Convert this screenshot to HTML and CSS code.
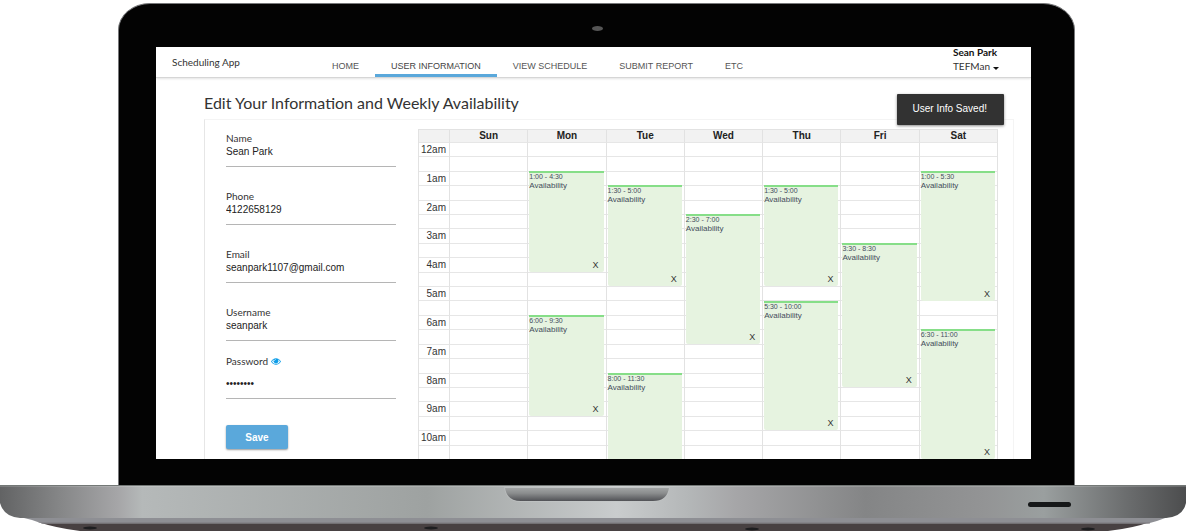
FILE: index.html
```html
<!DOCTYPE html>
<html lang="en">
<head>
<meta charset="utf-8">
<title>Scheduling App</title>
<link rel="stylesheet" href="styles.css">
</head>
<body>
<div class="laptop">
  <div class="lid">
    <div class="bezel-top"><span class="camera"></span></div>
    <div class="screen">
      <header class="topbar">
        <div class="brand">Scheduling App</div>
        <nav class="tabs">
          <a class="tab" href="#home">HOME</a>
          <a class="tab tab-active" href="#user">USER INFORMATION</a>
          <a class="tab" href="#schedule">VIEW SCHEDULE</a>
          <a class="tab" href="#report">SUBMIT REPORT</a>
          <a class="tab" href="#etc">ETC</a>
        </nav>
        <div class="account">
          <div class="account-name">Sean Park</div>
          <button class="account-menu" type="button">TEFMan <span class="caret"></span></button>
        </div>
      </header>
      <div class="toast" role="status">User Info Saved!</div>
      <main class="content">
        <h1 class="title">Edit Your Information and Weekly Availability</h1>
        <div class="card">
          <form class="profile">
            <div class="field">
              <label class="label" for="name">Name</label>
              <input class="input" id="name" type="text" value="Sean Park">
            </div>
            <div class="field">
              <label class="label" for="phone">Phone</label>
              <input class="input" id="phone" type="text" value="4122658129">
            </div>
            <div class="field">
              <label class="label" for="email">Email</label>
              <input class="input" id="email" type="text" value="seanpark1107@gmail.com">
            </div>
            <div class="field">
              <label class="label" for="username">Username</label>
              <input class="input" id="username" type="text" value="seanpark">
            </div>
            <div class="field field-password">
              <label class="label" for="password">Password
                <svg class="eye" viewBox="0 0 20 14" aria-hidden="true"><path fill="#0d9de8" fill-rule="evenodd" d="M0 7C3 2.500 6.500 .500 10 .500S17 2.500 20 7C17 11.500 13.500 13.500 10 13.500S3 11.500 0 7ZM2 7C4.500 10.600 7 12 10 12S15.500 10.600 18 7C16.900 5.300 15.500 3.900 14 3A5 5 0 1 1 6 3C4.500 3.900 3.100 5.300 2 7ZM10 2.300A3.500 3.500 0 0 0 6.600 5.800H7.700A2.400 2.400 0 0 1 10 3.400Z"/></svg>
              </label>
              <input class="input input-password" id="password" type="password" value="password">
            </div>
            <button class="save" type="button">Save</button>
          </form>
          <div class="calendar">
            <table class="week">
              <thead>
                <tr><th></th><th>Sun</th><th>Mon</th><th>Tue</th><th>Wed</th><th>Thu</th><th>Fri</th><th>Sat</th></tr>
              </thead>
              <tbody>
                <tr><th>12am</th><td></td><td></td><td></td><td></td><td></td><td></td><td></td></tr>
                <tr><th>1am</th><td></td><td></td><td></td><td></td><td></td><td></td><td></td></tr>
                <tr><th>2am</th><td></td><td></td><td></td><td></td><td></td><td></td><td></td></tr>
                <tr><th>3am</th><td></td><td></td><td></td><td></td><td></td><td></td><td></td></tr>
                <tr><th>4am</th><td></td><td></td><td></td><td></td><td></td><td></td><td></td></tr>
                <tr><th>5am</th><td></td><td></td><td></td><td></td><td></td><td></td><td></td></tr>
                <tr><th>6am</th><td></td><td></td><td></td><td></td><td></td><td></td><td></td></tr>
                <tr><th>7am</th><td></td><td></td><td></td><td></td><td></td><td></td><td></td></tr>
                <tr><th>8am</th><td></td><td></td><td></td><td></td><td></td><td></td><td></td></tr>
                <tr><th>9am</th><td></td><td></td><td></td><td></td><td></td><td></td><td></td></tr>
                <tr><th>10am</th><td></td><td></td><td></td><td></td><td></td><td></td><td></td></tr>
              </tbody>
            </table>
            <div class="events">
              <div class="event" style="grid-column:2;grid-row:3/10"><span class="time">1:00 - 4:30</span><span>Availability</span><button class="remove" type="button">X</button></div>
              <div class="event" style="grid-column:2;grid-row:13/20"><span class="time">6:00 - 9:30</span><span>Availability</span><button class="remove" type="button">X</button></div>
              <div class="event" style="grid-column:3;grid-row:4/11"><span class="time">1:30 - 5:00</span><span>Availability</span><button class="remove" type="button">X</button></div>
              <div class="event event-cut" style="grid-column:3;grid-row:17/23"><span class="time">8:00 - 11:30</span><span>Availability</span></div>
              <div class="event" style="grid-column:4;grid-row:6/15"><span class="time">2:30 - 7:00</span><span>Availability</span><button class="remove" type="button">X</button></div>
              <div class="event" style="grid-column:5;grid-row:4/11"><span class="time">1:30 - 5:00</span><span>Availability</span><button class="remove" type="button">X</button></div>
              <div class="event" style="grid-column:5;grid-row:12/21"><span class="time">5:30 - 10:00</span><span>Availability</span><button class="remove" type="button">X</button></div>
              <div class="event" style="grid-column:6;grid-row:8/18"><span class="time">3:30 - 8:30</span><span>Availability</span><button class="remove" type="button">X</button></div>
              <div class="event" style="grid-column:7;grid-row:3/12"><span class="time">1:00 - 5:30</span><span>Availability</span><button class="remove" type="button">X</button></div>
              <div class="event" style="grid-column:7;grid-row:14/23"><span class="time">6:30 - 11:00</span><span>Availability</span><button class="remove" type="button">X</button></div>
            </div>
          </div>
        </div>
      </main>
    </div>
  </div>
  <svg class="base" viewBox="0 0 1186 46" preserveAspectRatio="none" aria-hidden="true">
    <defs>
      <linearGradient id="deck" gradientUnits="userSpaceOnUse" x1="0" x2="1186" y1="0" y2="0">
        <stop offset="0" stop-color="#626364"/>
        <stop offset=".05" stop-color="#858687"/>
        <stop offset=".1" stop-color="#a6a6a8"/>
        <stop offset=".12" stop-color="#b5b9b9"/>
        <stop offset=".36" stop-color="#9ea2a1"/>
        <stop offset=".52" stop-color="#c9cccd"/>
        <stop offset=".58" stop-color="#b4b7b8"/>
        <stop offset=".62" stop-color="#a6a6a8"/>
        <stop offset=".73" stop-color="#848586"/>
        <stop offset=".83" stop-color="#939495"/>
        <stop offset=".88" stop-color="#9a9f9f"/>
        <stop offset=".95" stop-color="#6b6d6e"/>
        <stop offset="1" stop-color="#4c4d4e"/>
      </linearGradient>
      <linearGradient id="notch" x1="0" x2="0" y1="0" y2="1">
        <stop offset="0" stop-color="#a1a4a4"/>
        <stop offset=".4" stop-color="#8b8d8e"/>
        <stop offset="1" stop-color="#515256"/>
      </linearGradient>
    </defs>
    <path fill="#484142" d="M38 37H1150Q1134 43 1108 46H80Q56 43 38 37Z"/>
    <path fill="#8e8f94" d="M22 32H1168Q1158 36 1148 38.500H42Q34 35 24 33Z"/>
    <path fill="#7c7b7f" d="M40 37.500H1150V38.500H42Z"/>
    <path fill="url(#deck)" d="M0 0H1186V18Q1183 32 1166 33H20Q4 32 0 18Z"/>
    <path fill="#737876" d="M0 0H1186V1H0Z"/>
    <path fill="#fff" opacity=".15" d="M0 1H1186V2H0Z"/>
    <path fill="#c3c6c6" d="M504 2H670Q668 17 653 17H521Q506 17 504 2Z" opacity=".6"/>
    <path fill="url(#notch)" d="M505 3H669Q667 16 653 16H521Q507 16 505 3Z"/>
    <rect x="1028" y="17" width="43" height="5" rx="2.500" fill="#151718"/>
    <ellipse cx="90" cy="43" rx="7" ry="1.500" fill="#1e1e20"/>
    <ellipse cx="431" cy="43" rx="7" ry="1.500" fill="#1e1e20"/>
    <ellipse cx="752" cy="44" rx="7" ry="1.500" fill="#1e1e20"/>
    <ellipse cx="1088" cy="44" rx="7" ry="1.500" fill="#1e1e20"/>
  </svg>
</div>
</body>
</html>
```
FILE: styles.css
```css
* { box-sizing: border-box; }

body {
  margin: 0;
  background: #fff;
  color: #333;
  font-family: "Liberation Sans", Arial, sans-serif;
  font-size: 10px;
}

button, input { font: inherit; color: inherit; border: 0; padding: 0; margin: 0; background: none; }

.laptop {
  display: flex;
  flex-direction: column;
  min-height: 100vh;
  padding-top: 3px;
}

.lid {
  flex: 1;
  display: flex;
  flex-direction: column;
  margin: 0 111px 0 118px;
  padding: 0 43px 26px 37px;
  background: #030303;
  border: 1px solid #77787a;
  border-bottom: 0;
  border-radius: 32px 32px 0 0 / 27px 27px 0 0;
}

.bezel-top {
  display: flex;
  justify-content: center;
  height: 43px;
  padding: 22px 0 0 8px;
}

.camera { width: 11px; height: 5px; border-radius: 50%; background: #555; }

.screen {
  position: relative;
  flex: 1;
  display: flex;
  flex-direction: column;
  overflow: hidden;
  background: #fff;
}

.topbar {
  display: flex;
  height: 31px;
  padding: 0 32px 0 16px;
  border-bottom: 1px solid #d6d6d6;
  box-shadow: 0 1px 2px #e4e4e4;
}

.brand {
  width: 144px;
  padding-top: 9px;
  font: 10px/12px Lato, sans-serif;
}

.tabs { display: flex; flex: 1; }

.tab {
  padding: 13px 16px 0;
  border-bottom: 3px solid transparent;
  color: #555;
  font-size: 9px;
  line-height: 12px;
  text-decoration: none;
  white-space: nowrap;
}

.tab-active { border-color: #5aa8db; color: #444; }

.account { font: 10px/11px Lato, sans-serif; }
.account-name { color: #111; font-weight: 700; }

.account-menu {
  display: flex;
  align-items: center;
  gap: 3px;
  padding-top: 3px;
}

.caret { border: 3px solid transparent; border-top-color: #111; border-bottom: 0; margin-top: 3px; }

.toast {
  position: absolute;
  top: 47px;
  right: 27px;
  padding: 9px 17px 10px 16px;
  border-radius: 1px;
  background: #323232;
  box-shadow: 0 1px 3px #888;
  color: #fff;
  line-height: 12px;
}

.content {
  flex: 1;
  display: flex;
  flex-direction: column;
  padding: 13px 17px 0 48px;
}

.title {
  margin: 0 0 4px;
  font: 400 16px/24px Lato, sans-serif;
}

.card {
  flex: 1;
  display: flex;
  gap: 22px;
  padding: 9px 15px 0 21px;
  border: 1px solid #f4f4f4;
  border-left-color: #e6e6e6;
  border-bottom: 0;
}

.profile { width: 170px; padding-top: 3px; }

.field { display: flex; flex-direction: column; height: 35px; margin-bottom: 23px; }
.label { font: 10px/13px Lato, sans-serif; }

.input {
  width: 100%;
  height: 22px;
  padding-bottom: 8px;
  border-bottom: 1px solid #b5b5b5;
  border-radius: 0;
  color: #222;
}

.field-password { height: 44px; margin: -9px 0 26px; }
.field-password .label { display: flex; align-items: center; gap: 3px; }
.eye { width: 10px; height: 7px; }
.input-password { height: 31px; padding-top: 8px; }

.save {
  width: 62px;
  height: 24px;
  border-radius: 2px;
  background: #5aa8db;
  box-shadow: 0 1px 2px #999;
  color: #fff;
  font-weight: 700;
}

.calendar { position: relative; flex: 1; display: grid; }

.week {
  display: grid;
  grid-template-columns: 31px repeat(7, 1fr);
  grid-template-rows: 12px repeat(11, 1fr);
  border-top: 1px solid #e2e2e2;
  border-left: 1px solid #e2e2e2;
}

.week thead, .week tbody, .week tr { display: contents; }

.week th, .week td {
  padding: 0;
  border-right: 1px solid #e2e2e2;
}

.week thead th {
  background: #f2f2f2;
  color: #222;
  line-height: 12px;
}

.week tbody th, .week tbody td {
  border-top: 1px solid #e6e6e6;
  background: linear-gradient(#e6e6e6, #e6e6e6) 0 50% / 100% 1px no-repeat;
}

.week tbody th {
  padding-right: 3px;
  font-weight: 400;
  line-height: 13px;
  text-align: right;
}

.events {
  position: absolute;
  inset: 13px 0 0 32px;
  display: grid;
  grid-template-columns: repeat(7, 1fr);
  grid-template-rows: repeat(22, 1fr);
}

.event {
  position: relative;
  display: flex;
  flex-direction: column;
  min-height: 0;
  margin: 0 3px 0 1px;
  border-top: 2px solid #86de88;
  border-radius: 0 0 2px 2px;
  background: #e6f3e0;
  color: #444d5c;
  font-size: 8px;
  line-height: 10px;
}

.event-cut { border-radius: 0; }
.time { font-size: 7px; line-height: 8px; }

.remove {
  margin: auto 5px 1px auto;
  color: #333;
  font-size: 9px;
  line-height: 11px;
}
```
